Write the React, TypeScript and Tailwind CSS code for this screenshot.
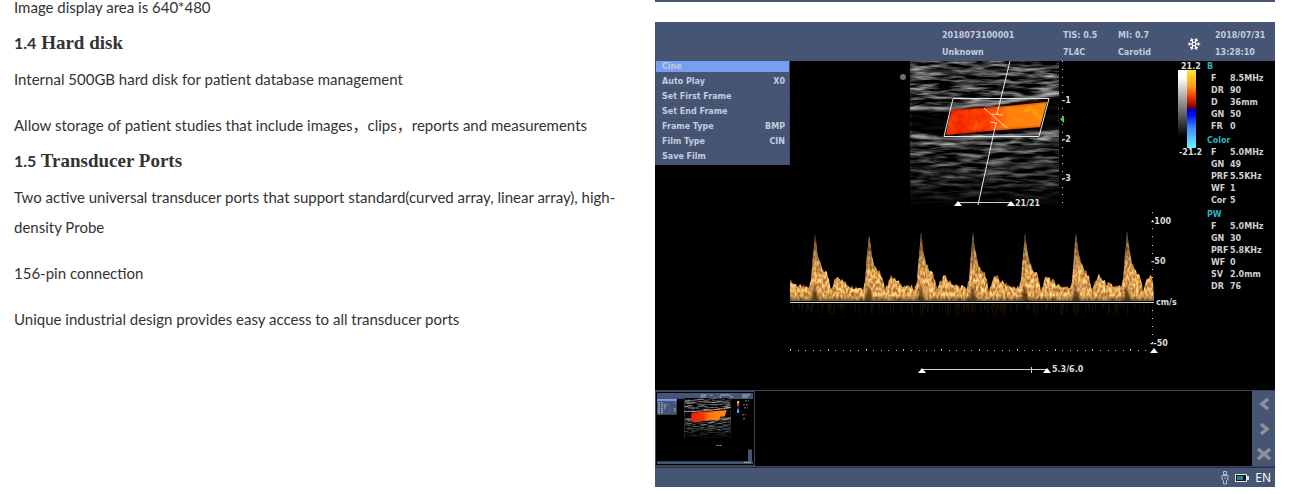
import React from 'react';
import { Snowflake } from 'lucide-react';

interface MenuItem { label: string; value?: string }
interface ParamGroup { title: string; rows: [string, string][] }

const MENU: MenuItem[] = [
  { label: 'Auto Play', value: 'X0' },
  { label: 'Set First Frame' },
  { label: 'Set End Frame' },
  { label: 'Frame Type', value: 'BMP' },
  { label: 'Film Type', value: 'CIN' },
  { label: 'Save Film' },
];

const PARAMS: ParamGroup[] = [
  { title: 'B', rows: [['F', '8.5MHz'], ['DR', '90'], ['D', '36mm'], ['GN', '50'], ['FR', '0']] },
  { title: 'Color', rows: [['F', '5.0MHz'], ['GN', '49'], ['PRF', '5.5KHz'], ['WF', '1'], ['Cor', '5']] },
  { title: 'PW', rows: [['F', '5.0MHz'], ['GN', '30'], ['PRF', '5.8KHz'], ['WF', '0'], ['SV', '2.0mm'], ['DR', '76']] },
];

const PEAKS = [-27, 25, 79, 131, 183, 235, 286, 337];

// One heartbeat: [offset from the systolic peak, height above the baseline]
const BEAT: [number, number][] = [
  [-6, 13], [-4, 20], [-2, 46], [0, 67], [1, 60], [3, 46], [5, 37], [8, 31], [12, 26], [14, 20],
  [16, 9], [17, 13], [20, 21], [23, 25], [26, 21], [31, 17], [37, 14], [46, 13],
];

const heightAt = (x: number) => {
  const peak = [...PEAKS].reverse().find(p => x >= p - 6) ?? PEAKS[0];
  const dx = x - peak;
  const i = BEAT.findIndex(b => b[0] >= dx);
  if (i < 0) return 13;
  if (i === 0) return BEAT[0][1];
  const [x0, y0] = BEAT[i - 1];
  const [x1, y1] = BEAT[i];
  return y0 + ((y1 - y0) * (dx - x0)) / (x1 - x0);
};

const jitter = (x: number) => {
  const n = Math.sin(x * 12.9898) * 43758.5453;
  return n - Math.floor(n);
};

const columns = Array.from({ length: 364 }, (_, x) => x);
const tracePath = `M0 240 ${columns.map(x => `L${x} ${(240 - heightAt(x) - jitter(x) * 5 + 2).toFixed(1)}`).join(' ')} L364 240 Z`;

// B-mode frame, 149 x 146
const Tissue: React.FC = () => (
  <g>
    <rect width="149" height="146" filter="url(#speckle)" />
    <g fill="none" stroke="#d8d8d8" filter="url(#soft)">
      <path d="M0 9 Q60 12 149 6" strokeWidth="1" opacity=".55" />
      <path d="M0 14 Q70 10 149 17" strokeWidth="1" opacity=".5" />
      <path d="M0 38 Q30 34 60 39 T149 32" strokeWidth="1" opacity=".5" />
      <path d="M0 48 Q50 48 88 42 T149 33" strokeWidth="3" opacity=".55" />
      <path d="M0 75 Q45 80 90 76 T149 71" strokeWidth="3" opacity=".55" />
      <path d="M0 84 Q30 80 60 86 T149 82" strokeWidth="2" opacity=".3" />
      <path d="M8 118 Q28 105 50 112 T100 109 T147 106" strokeWidth="4" opacity=".3" />
    </g>
    <path d="M0 51 Q60 49 90 45 T149 36 V68 Q90 73 40 75 L0 72Z" fill="#030303" opacity=".9" filter="url(#soft)" />
    <rect width="149" height="146" fill="url(#depth)" />
    <path d="M42 49 Q90 46 137 41 L130 66 Q90 69 36 74 L39 57Z" fill="url(#flow)" />
    <path d="M42 49 Q90 46 137 41 L130 66 Q90 69 36 74 L39 57Z" filter="url(#flowNoise)" opacity=".35" />
    <path d="M42 49 Q90 46 137 41M130 66 Q90 69 36 74" fill="none" stroke="#7a0800" opacity=".7" filter="url(#soft)" />
  </g>
);

const Defs: React.FC = () => (
  <defs>
    <filter id="speckle" x="0" y="0" width="100%" height="100%" colorInterpolationFilters="sRGB">
      <feTurbulence type="fractalNoise" baseFrequency="0.04 0.26" numOctaves="3" seed="7" />
      <feColorMatrix values="1.6 0 0 0 -.62  1.6 0 0 0 -.62  1.6 0 0 0 -.62  0 0 0 0 1" />
    </filter>
    <filter id="soft" x="-10%" y="-50%" width="120%" height="200%">
      <feGaussianBlur stdDeviation=".8" />
    </filter>
    <filter id="flowNoise" colorInterpolationFilters="sRGB">
      <feTurbulence type="fractalNoise" baseFrequency=".13" numOctaves="2" seed="3" />
      <feColorMatrix values="0 0 0 0 1  0 1.2 0 0 0  0 0 0 0 0  2 0 0 0 -.7" />
      <feComposite in2="SourceGraphic" operator="in" />
    </filter>
    <filter id="grain" x="0" y="0" width="100%" height="100%" colorInterpolationFilters="sRGB">
      <feTurbulence type="fractalNoise" baseFrequency=".45 .22" numOctaves="2" seed="11" />
      <feColorMatrix values=".8 0 0 0 .48  .9 0 0 0 .2  .8 0 0 0 -.05  0 0 0 0 1" />
      <feComposite in2="SourceGraphic" operator="in" />
    </filter>
    <linearGradient id="depth" x2="0" y2="1">
      <stop offset=".5" stopColor="#000" stopOpacity="0" />
      <stop offset=".82" stopColor="#000" stopOpacity=".45" />
      <stop offset="1" stopColor="#000" />
    </linearGradient>
    <linearGradient id="flow">
      <stop offset="0" stopColor="#f21d00" />
      <stop offset=".4" stopColor="#fb3303" />
      <stop offset=".6" stopColor="#ff7a10" />
      <stop offset="1" stopColor="#ff8a0c" />
    </linearGradient>
    <linearGradient id="grayBar" x2="0" y2="1">
      <stop offset=".1" stopColor="#fff" />
      <stop offset=".85" stopColor="#000" />
    </linearGradient>
    <linearGradient id="colorBar" x2="0" y2="1">
      <stop offset="0" stopColor="#ffe62e" />
      <stop offset=".2" stopColor="#ffa318" />
      <stop offset=".36" stopColor="#e83000" />
      <stop offset=".49" stopColor="#6b0000" />
      <stop offset=".5" stopColor="#0000b8" />
      <stop offset=".58" stopColor="#0010f5" />
      <stop offset=".75" stopColor="#3f8dff" />
      <stop offset="1" stopColor="#6ff4ff" />
    </linearGradient>
    <linearGradient id="fade" gradientUnits="userSpaceOnUse" x1="0" y1="172" x2="0" y2="240">
      <stop offset="0" stopColor="#000" stopOpacity=".55" />
      <stop offset=".6" stopColor="#000" stopOpacity="0" />
      <stop offset=".92" stopColor="#000" stopOpacity="0" />
      <stop offset="1" stopColor="#000" stopOpacity=".5" />
    </linearGradient>
  </defs>
);

const ScanCanvas: React.FC = () => (
  <svg viewBox="0 0 417 329" className="block w-full text-[8px] font-bold" fill="#dcdcdc" role="img" aria-label="Carotid scan">
    <Defs />
    <circle cx="113" cy="16" r="3" fill="#6e6e6e" />
    <g transform="translate(120 0)"><Tissue /></g>

    {/* Sample line, gate and colour box */}
    <g fill="none" stroke="#e8e8e8" strokeWidth="1">
      <path d="M163 37.500H259L249 75.500H154Z" />
      <path d="M220 0L207 53M206 62L188 144" />
      <path d="M202 53L213 54M200 61L207 62M194 47L217 67" stroke="#ffd59b" />
    </g>

    {/* Depth ruler */}
    {Array.from({ length: 19 }, (_, i) => (
      <rect key={i} x="272" y={Math.round(i * 7.85)} width="1" height="1" />
    ))}
    <path d="M274 55V62L270 58Z" fill="#3fdc4b" />
    <text x="272" y="42">-1</text>
    <text x="272" y="81">-2</text>
    <text x="272" y="120">-3</text>

    <path d="M168 141.500H221" stroke="#cfcfcf" />
    <path d="M164 145L168 140L172 145ZM217 145L221 140L225 145Z" fill="#fff" />
    <text x="225" y="145">21/21</text>

    {/* Velocity map */}
    <text x="391" y="8">21.2</text>
    <rect x="388" y="9" width="9" height="78" fill="url(#grayBar)" />
    <rect x="397" y="9" width="9" height="78" fill="url(#colorBar)" />
    <text x="389" y="94">-21.2</text>

    {/* Doppler trace */}
    <path d={tracePath} filter="url(#grain)" />
    <path d={tracePath} fill="url(#fade)" />
    {PEAKS.slice(1).map(p => (
      <path key={p} d={`M${p - 4} 240L${p - 1} 222L${p + 2} 232L${p + 4} 240Z`} fill="#2a1505" opacity=".65" filter="url(#soft)" />
    ))}
    {columns.filter(x => jitter(x + 900) > 0.55).map(x => (
      <rect key={x} x={x} y="243" width="1" height={3 + Math.round(jitter(x + 50) * 9)} fill="#3a2410" opacity=".35" />
    ))}
    <path d="M0 241.500H364" stroke="#d8d2c8" />
    {Array.from({ length: 49 }, (_, i) => (
      <rect key={i} x={Math.round(i * 7.56)} y={i % 5 ? 289 : 288} width="1" height={i % 5 ? 1 : 2} fill="#bdbdbd" />
    ))}
    {Array.from({ length: 17 }, (_, i) => (
      <rect key={i} x="362" y={Math.round(151 + i * 8.15)} width="1" height="1" />
    ))}
    <text x="361" y="163">-100</text>
    <text x="361" y="203">-50</text>
    <text x="366" y="244">cm/s</text>
    <text x="360" y="285">--50</text>
    <path d="M360 292L364 287L368 292Z" fill="#fff" />

    <path d="M132 308.500H257M241.500 306V312" stroke="#cfcfcf" />
    <path d="M128 312L132 307L136 312ZM253 312L257 307L261 312Z" fill="#fff" />
    <text x="262" y="311">5.3/6.0</text>
  </svg>
);

const Thumbnail: React.FC = () => (
  <svg viewBox="0 0 97 72" className="block w-full" aria-hidden="true">
    <rect width="97" height="72" fill="#000" />
    <rect width="97" height="6" fill="#475575" />
    <path d="M44 2H50M54 2H56M64 2H74M86 2H94M44 4H49M63 4H65M74 4H77M86 4H92" stroke="#aab4ca" />
    <rect y="6" width="20" height="16" fill="#475575" />
    <rect y="6" width="20" height="2" fill="#769ff0" />
    <path d="M1 10H6M1 12H11M1 14H10M1 16H8M1 18H7M1 20H6M18 10H19M17 16H19M17 18H19" stroke="#aab4ca" strokeDasharray="2 1" />
    <g transform="translate(28 6) scale(.31 .27)"><Tissue /></g>
    <path d="M35 20L65 20L63 27L34 29Z" fill="url(#flow)" />
    <rect x="81" y="8" width="2" height="12" fill="url(#colorBar)" />
    <path d="M89 8H93M87 12H92M88 15H92M86 22H90M87 26H90" stroke="#8b8b8b" strokeDasharray="2 1" />
    <path d="M60 53H65" stroke="#aaa" strokeDasharray="2 1" />
    <rect x="92" y="57" width="4" height="12" fill="#475575" />
    <rect y="69" width="97" height="3" fill="#475575" />
    <path d="M88 70H95" stroke="#9fb6b4" />
  </svg>
);

const StripButton: React.FC<{ label: string; d: string }> = ({ label, d }) => (
  <button type="button" aria-label={label} className="flex h-[25px] items-center justify-center">
    <svg viewBox="0 0 16 16" className="size-4" fill="none" stroke="#8d9296" strokeWidth="3.500"><path d={d} /></svg>
  </button>
);

const Scanner: React.FC = () => (
  <figure className="bg-black font-['DejaVu_Sans',sans-serif] text-[8px] font-bold leading-3 text-[#c3ccdd]">
    <header className="flex h-[39px] items-center justify-end bg-[#475575] pt-1 leading-[17px]">
      <div className="w-[121px]"><div>2018073100001</div><div>Unknown</div></div>
      <div className="w-[55px]"><div>TIS: 0.5</div><div>7L4C</div></div>
      <div className="w-[69px]"><div>MI: 0.7</div><div>Carotid</div></div>
      <div className="w-7"><Snowflake className="size-3.5 text-white" strokeWidth={2} /></div>
      <div className="w-[60px]"><div>2018/07/31</div><div>13:28:10</div></div>
    </header>

    <div className="flex items-start">
      <nav className="w-[135px] shrink-0 border-x border-[#3e4c6c] bg-[#475575]">
        <h3 className="mb-[3px] bg-[#769ff0] pl-1.5 leading-[11px]">Cine</h3>
        {MENU.map(item => (
          <button key={item.label} type="button" className="flex h-[15px] w-full items-center justify-between border-b border-[#434f6c] pl-1.5 pr-1">
            <span>{item.label}</span>
            <span>{item.value}</span>
          </button>
        ))}
      </nav>
      <div className="min-w-0 flex-1"><ScanCanvas /></div>
      <div className="w-[68px] shrink-0 space-y-0.5 text-[#d0d0d0]">
        {PARAMS.map(group => (
          <section key={group.title}>
            <h3 className="text-[#2bb5bd]">{group.title}</h3>
            <dl className="grid grid-cols-[19px_1fr] pl-1">
              {group.rows.map(([key, value]) => (
                <React.Fragment key={key}><dt>{key}</dt><dd>{value}</dd></React.Fragment>
              ))}
            </dl>
          </section>
        ))}
      </div>
    </div>

    <div className="flex border-y border-[#3b4760]">
      <div className="w-[100px] border border-[#3b4760] p-px"><Thumbnail /></div>
      <div className="flex-1" />
      <div className="flex w-[23px] flex-col bg-[#475575]">
        <StripButton label="Previous" d="M12 3L6 8L12 13" />
        <StripButton label="Next" d="M5 3L11 8L5 13" />
        <StripButton label="Delete" d="M2 3L14 13M14 3L2 13" />
      </div>
    </div>

    <footer className="flex h-5 items-center justify-end gap-1.5 border-t border-[#262e40] bg-[#475575] pr-1">
      <svg viewBox="0 0 8 14" className="h-3.5 w-2" fill="none" stroke="#a9c3c8">
        <path d="M2.500 .5H5.500V3.500H2.500ZM1 4.500H7V8L5.500 10V13H2.500V10L1 8ZM4 6V8" />
      </svg>
      <svg viewBox="0 0 14 8" className="h-2 w-3.5">
        <rect x=".5" y=".5" width="11" height="7" fill="#0c1a20" stroke="#dce6e8" />
        <rect x="2" y="2" width="6" height="4" fill="#2c8184" />
        <rect x="12" y="2" width="2" height="4" fill="#dce6e8" />
      </svg>
      <span className="font-['Open_Sans',sans-serif] text-xs font-normal text-white">EN</span>
    </footer>
  </figure>
);

const Heading: React.FC<{ no: string; children: React.ReactNode }> = ({ no, children }) => (
  <h2 className="font-['Liberation_Serif',serif] text-[19px] font-bold leading-[42px]">
    <span className="font-['Lato',sans-serif] text-base">{no}</span> {children}
  </h2>
);

const App: React.FC = () => (
  <div className="flex items-start gap-[21px] bg-white pl-3.5 pr-4">
    <article className="min-w-0 flex-1 font-['Lato','Noto_Sans_CJK_SC',sans-serif] text-[15px] leading-[30px] text-[#333]">
      <p className="mb-2 leading-[14px]">Image display area is 640*480</p>
      <Heading no="1.4">Hard disk</Heading>
      <p className="mb-4">Internal 500GB hard disk for patient database management</p>
      <p>Allow storage of patient studies that include images，clips，reports and measurements</p>
      <Heading no="1.5">Transducer Ports</Heading>
      <p className="mb-4">Two active universal transducer ports that support standard(curved array, linear array), high-density Probe</p>
      <p className="mb-4">156-pin connection</p>
      <p>Unique industrial design provides easy access to all transducer ports</p>
    </article>
    <div className="min-w-0 flex-1">
      <div className="mb-5 h-0.5 bg-[#475575]" />
      <Scanner />
    </div>
  </div>
);

export default App;
